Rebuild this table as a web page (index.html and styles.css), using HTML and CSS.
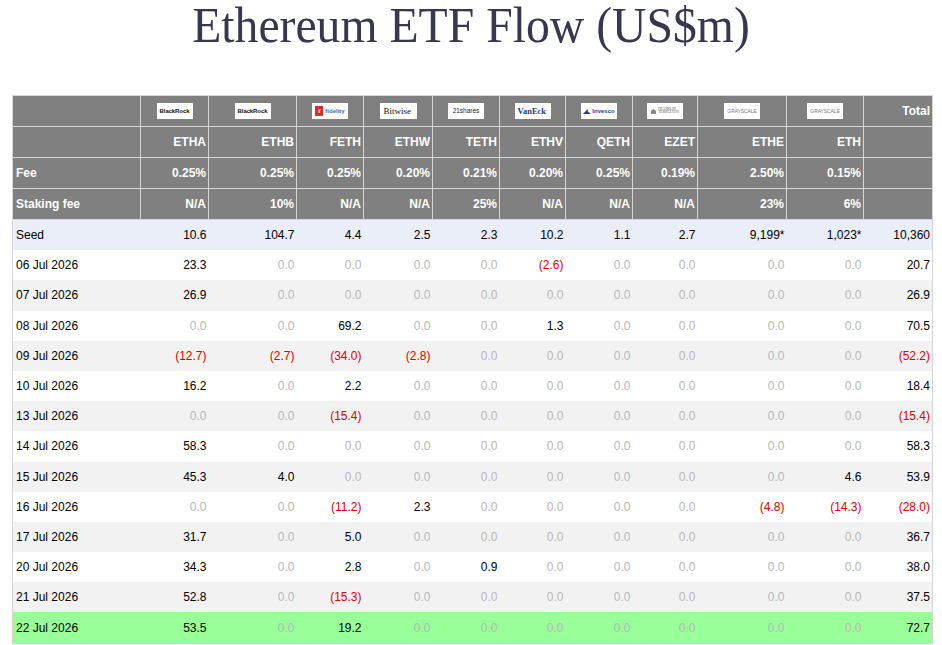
FILE: index.html
```html
<!DOCTYPE html>
<html>
<head>
<meta charset="utf-8">
<title>Ethereum ETF Flow</title>
<link rel="stylesheet" href="styles.css">
</head>
<body>
<h1 class="title">Ethereum ETF Flow (US$m)</h1>
<table class="flow">
<colgroup>
<col class="c-date"><col class="c-etha"><col class="c-ethb"><col class="c-feth"><col class="c-ethw"><col class="c-teth"><col class="c-ethv"><col class="c-qeth"><col class="c-ezet"><col class="c-ethe"><col class="c-eth"><col class="c-total">
</colgroup>
<thead>
<tr class="hrow">
<th></th>
<th class="lc"><span class="logo blk">BlackRock</span></th>
<th class="lc"><span class="logo blk">BlackRock</span></th>
<th class="lc"><span class="logo fid"><span class="fid-sq">f</span><span class="fid-t">fidelity</span></span></th>
<th class="lc"><span class="logo bit">Bitwise<sup>·</sup></span></th>
<th class="lc"><span class="logo shr">21shares</span></th>
<th class="lc"><span class="logo van">VanEck<sup>·</sup></span></th>
<th class="lc"><span class="logo inv"><svg class="inv-i" viewBox="0 0 10 6" width="8" height="5"><path d="M0 6 L6 0 L6 6 Z M6 3 L10 6 L6 6 Z" fill="#1e3d9e"/></svg>Invesco</span></th>
<th class="lc"><span class="logo frk"><svg viewBox="0 0 6 6" width="5" height="5"><path d="M0 6 V2 L3 0 L6 2 V6 Z" fill="#888"/></svg><span class="frk-t">FRANKLIN<br>TEMPLETON</span></span></th>
<th class="lc"><span class="logo gry">GRAYSCALE</span></th>
<th class="lc"><span class="logo gry">GRAYSCALE</span></th>
<th>Total</th>
</tr>
<tr class="hrow">
<th></th><th>ETHA</th><th>ETHB</th><th>FETH</th><th>ETHW</th><th>TETH</th><th>ETHV</th><th>QETH</th><th>EZET</th><th>ETHE</th><th>ETH</th><th></th>
</tr>
<tr class="hrow">
<th class="lbl">Fee</th><th>0.25%</th><th>0.25%</th><th>0.25%</th><th>0.20%</th><th>0.21%</th><th>0.20%</th><th>0.25%</th><th>0.19%</th><th>2.50%</th><th>0.15%</th><th></th>
</tr>
<tr class="hrow">
<th class="lbl">Staking fee</th><th>N/A</th><th>10%</th><th>N/A</th><th>N/A</th><th>25%</th><th>N/A</th><th>N/A</th><th>N/A</th><th>23%</th><th>6%</th><th></th>
</tr>
</thead>
<tbody>
<tr class="seed"><td class="d">Seed</td><td>10.6</td><td>104.7</td><td>4.4</td><td>2.5</td><td>2.3</td><td>10.2</td><td>1.1</td><td>2.7</td><td>9,199*</td><td>1,023*</td><td>10,360</td></tr>
<tr class="w"><td class="d">06 Jul 2026</td><td>23.3</td><td class="z">0.0</td><td class="z">0.0</td><td class="z">0.0</td><td class="z">0.0</td><td class="n">(2.6)</td><td class="z">0.0</td><td class="z">0.0</td><td class="z">0.0</td><td class="z">0.0</td><td>20.7</td></tr>
<tr class="g"><td class="d">07 Jul 2026</td><td>26.9</td><td class="z">0.0</td><td class="z">0.0</td><td class="z">0.0</td><td class="z">0.0</td><td class="z">0.0</td><td class="z">0.0</td><td class="z">0.0</td><td class="z">0.0</td><td class="z">0.0</td><td>26.9</td></tr>
<tr class="w"><td class="d">08 Jul 2026</td><td class="z">0.0</td><td class="z">0.0</td><td>69.2</td><td class="z">0.0</td><td class="z">0.0</td><td>1.3</td><td class="z">0.0</td><td class="z">0.0</td><td class="z">0.0</td><td class="z">0.0</td><td>70.5</td></tr>
<tr class="g"><td class="d">09 Jul 2026</td><td class="n">(12.7)</td><td class="n">(2.7)</td><td class="n">(34.0)</td><td class="n">(2.8)</td><td class="z">0.0</td><td class="z">0.0</td><td class="z">0.0</td><td class="z">0.0</td><td class="z">0.0</td><td class="z">0.0</td><td class="n">(52.2)</td></tr>
<tr class="w"><td class="d">10 Jul 2026</td><td>16.2</td><td class="z">0.0</td><td>2.2</td><td class="z">0.0</td><td class="z">0.0</td><td class="z">0.0</td><td class="z">0.0</td><td class="z">0.0</td><td class="z">0.0</td><td class="z">0.0</td><td>18.4</td></tr>
<tr class="g"><td class="d">13 Jul 2026</td><td class="z">0.0</td><td class="z">0.0</td><td class="n">(15.4)</td><td class="z">0.0</td><td class="z">0.0</td><td class="z">0.0</td><td class="z">0.0</td><td class="z">0.0</td><td class="z">0.0</td><td class="z">0.0</td><td class="n">(15.4)</td></tr>
<tr class="w"><td class="d">14 Jul 2026</td><td>58.3</td><td class="z">0.0</td><td class="z">0.0</td><td class="z">0.0</td><td class="z">0.0</td><td class="z">0.0</td><td class="z">0.0</td><td class="z">0.0</td><td class="z">0.0</td><td class="z">0.0</td><td>58.3</td></tr>
<tr class="g"><td class="d">15 Jul 2026</td><td>45.3</td><td>4.0</td><td class="z">0.0</td><td class="z">0.0</td><td class="z">0.0</td><td class="z">0.0</td><td class="z">0.0</td><td class="z">0.0</td><td class="z">0.0</td><td>4.6</td><td>53.9</td></tr>
<tr class="w"><td class="d">16 Jul 2026</td><td class="z">0.0</td><td class="z">0.0</td><td class="n">(11.2)</td><td>2.3</td><td class="z">0.0</td><td class="z">0.0</td><td class="z">0.0</td><td class="z">0.0</td><td class="n">(4.8)</td><td class="n">(14.3)</td><td class="n">(28.0)</td></tr>
<tr class="g"><td class="d">17 Jul 2026</td><td>31.7</td><td class="z">0.0</td><td>5.0</td><td class="z">0.0</td><td class="z">0.0</td><td class="z">0.0</td><td class="z">0.0</td><td class="z">0.0</td><td class="z">0.0</td><td class="z">0.0</td><td>36.7</td></tr>
<tr class="w"><td class="d">20 Jul 2026</td><td>34.3</td><td class="z">0.0</td><td>2.8</td><td class="z">0.0</td><td>0.9</td><td class="z">0.0</td><td class="z">0.0</td><td class="z">0.0</td><td class="z">0.0</td><td class="z">0.0</td><td>38.0</td></tr>
<tr class="g"><td class="d">21 Jul 2026</td><td>52.8</td><td class="z">0.0</td><td class="n">(15.3)</td><td class="z">0.0</td><td class="z">0.0</td><td class="z">0.0</td><td class="z">0.0</td><td class="z">0.0</td><td class="z">0.0</td><td class="z">0.0</td><td>37.5</td></tr>
<tr class="latest"><td class="d">22 Jul 2026</td><td>53.5</td><td class="z">0.0</td><td>19.2</td><td class="z">0.0</td><td class="z">0.0</td><td class="z">0.0</td><td class="z">0.0</td><td class="z">0.0</td><td class="z">0.0</td><td class="z">0.0</td><td>72.7</td></tr>
</tbody>
</table>
</body>
</html>
```

FILE: styles.css
```css
html, body {
  margin: 0;
  padding: 0;
  background: #ffffff;
}

.title {
  margin: 0 0 44px 0;
  font-family: "Liberation Serif", "Times New Roman", serif;
  font-weight: normal;
  font-size: 51px;
  line-height: 51px;
  color: #37374f;
  text-align: center;
  transform: scaleX(0.935);
}

.flow {
  margin-left: 12px;
  width: 920px;
  table-layout: fixed;
  border-collapse: collapse;
  border: 1px solid #d4d4d4;
  font-family: "Liberation Sans", Arial, sans-serif;
  font-size: 12px;
}

.c-date { width: 128px; }
.c-etha { width: 68px; }
.c-ethb { width: 88px; }
.c-feth { width: 67px; }
.c-ethw { width: 69px; }
.c-teth { width: 67px; }
.c-ethv { width: 66px; }
.c-qeth { width: 67px; }
.c-ezet { width: 65px; }
.c-ethe { width: 89px; }
.c-eth { width: 77px; }
.c-total { width: 69px; }

.hrow th {
  background: #808080;
  color: #ffffff;
  font-weight: bold;
  text-align: right;
  height: 30px;
  padding: 0 2px 0 3px;
  border: 1px solid #d6d6d6;
  white-space: nowrap;
}

.hrow th.lbl { text-align: left; }
.hrow th.lc { text-align: center; padding: 0; }

tbody td {
  height: 30.2px;
  padding: 0 2px 0 3px;
  text-align: right;
  color: #000000;
  white-space: nowrap;
}

tbody td.d { text-align: left; }
tbody td.z { color: #b8b8b8; }
tbody td.n { color: #e00000; }

tr.seed td { background: #e9eef8; }
tr.w td { background: #ffffff; }
tr.g td { background: #f2f2f2; }
tr.latest td { background: #99ff99; }

/* logos */
.logo {
  display: inline-flex;
  align-items: center;
  justify-content: center;
  width: 36px;
  height: 16px;
  background: #ffffff;
  vertical-align: middle;
  overflow: hidden;
  font-weight: bold;
  line-height: 1;
  color: #111;
  white-space: nowrap;
}

.blk { font-size: 6px; letter-spacing: -0.1px; }
.fid { gap: 2px; }
.fid-sq {
  display: inline-flex;
  align-items: center;
  justify-content: center;
  width: 8px;
  height: 10px;
  background: #d4302b;
  color: #fff;
  font-size: 7px;
  font-family: "Liberation Serif", serif;
}
.fid-t { color: #3c6eb8; font-size: 6px; }
.bit {
  font-family: "Liberation Serif", serif;
  font-weight: normal;
  font-size: 9px;
  width: 37px;
}
.bit sup, .van sup { font-size: 4px; }
.shr { font-size: 6.5px; font-weight: normal; color: #222; }
.van {
  font-family: "Liberation Serif", serif;
  font-size: 8.5px;
  color: #1d3b7a;
}
.inv { font-size: 6px; color: #1e3d9e; gap: 1px; }
.frk { gap: 2px; }
.frk-t {
  font-family: "Liberation Serif", serif;
  font-size: 3.5px;
  font-weight: normal;
  color: #555;
  text-align: left;
}
.gry {
  font-size: 5px;
  font-weight: normal;
  color: #777;
  letter-spacing: -0.1px;
}
```
